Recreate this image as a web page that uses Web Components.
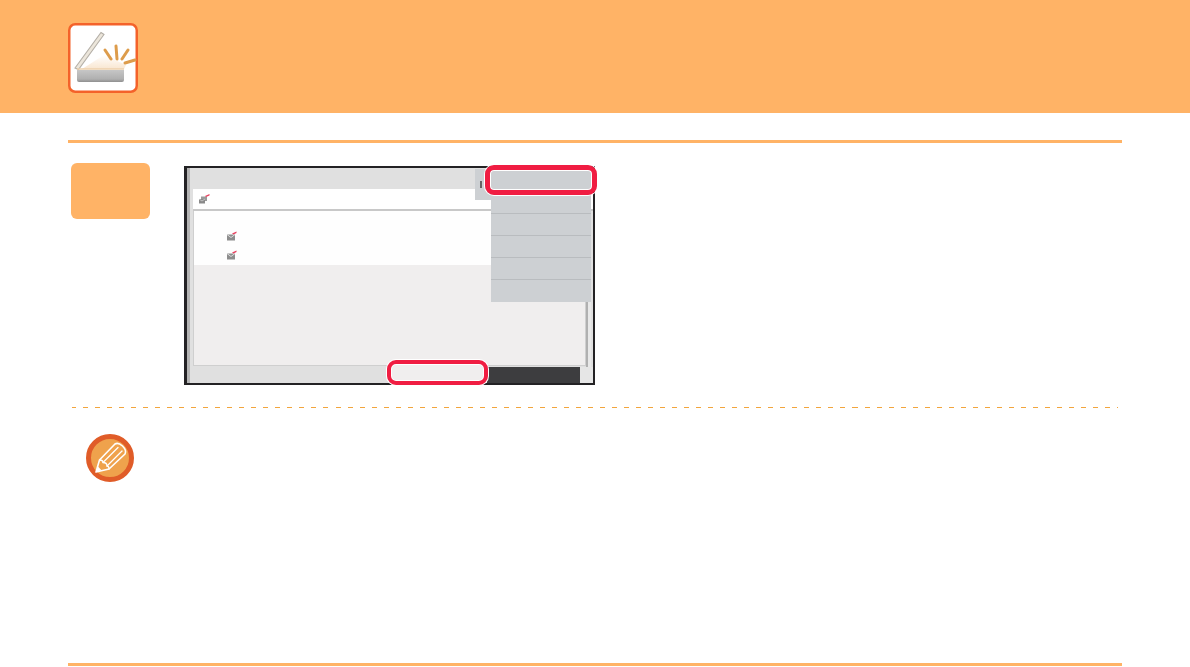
<!DOCTYPE html>
<html lang="en"><head><meta charset="utf-8"><title>Scanner</title>
<style>html,body{margin:0;background:#fff}body{width:1190px;height:667px;overflow:hidden;font-family:"Liberation Sans",sans-serif}</style>
</head><body>
<manual-page>
  <page-header slot="header"></page-header>
  <step-row><device-screen></device-screen></step-row>
  <note-block></note-block>
</manual-page>
<script>
function def(name, html){
  customElements.define(name, class extends HTMLElement{
    constructor(){super();this.attachShadow({mode:'open'}).innerHTML=html;}
  });
}
const env=`<svg width="10" height="10" viewBox="0 0 10 10" style="filter:blur(.25px)"><path d="M0 3.500 H8 V9.500 H0Z" fill="#8d8d8d"/><path d="M0 3.500 L4 6.500 L8 3.500" stroke="#ddd" fill="none"/><path d="M5 2.500 L9.500 .5 V2 L6.500 3.500Z" fill="#e8405f"/></svg>`;
def('manual-page',`<style>
:host{display:flex;flex-direction:column;width:1190px;height:667px}
main{flex:1;display:flex;flex-direction:column;margin:27px 68px 1px;border-top:3px solid #ffb366;border-bottom:3px solid #ffb366;box-sizing:border-box}
</style><slot name="header"></slot><main><slot></slot></main>`);
def('page-header',`<style>
:host{display:flex;align-items:flex-start;height:113px;background:#ffb366;padding:23px 0 0 68px;box-sizing:border-box}
svg{display:block}
</style>
<svg width="70" height="70" viewBox="0 0 70 70">
<defs>
<linearGradient id="b" x1="0" y1="0" x2="0" y2="1"><stop offset="0" stop-color="#c6c6c6"/><stop offset=".75" stop-color="#b0b0b0"/><stop offset="1" stop-color="#8f8f8f"/></linearGradient>
<linearGradient id="g" x1="0" y1="0" x2="0" y2="1"><stop offset="0" stop-color="#fff"/><stop offset="1" stop-color="#f9e6d0"/></linearGradient>
<filter id="s"><feGaussianBlur stdDeviation=".5"/></filter>
</defs>
<rect x="1.250" y="1.250" width="67.500" height="67.500" rx="6" fill="#fff" stroke="#f4622a" stroke-width="2.500"/>
<g filter="url(#s)">
<path d="M14 46 L36 32 L58 42 L56 46Z" fill="url(#g)"/>
<path d="M7 45 L33 9.500 L36 11.500 L10.500 46.500Z" fill="#ece6db" stroke="#b4afa7" stroke-width="1.100"/>
<path d="M9 47 H56 V57 Q56 59 54 59 H11 Q9 59 9 57Z" fill="url(#b)"/>
<path d="M9 46 H56" stroke="#ecd0ad" stroke-width="1.500"/>
<g stroke="#dd9c4c" stroke-width="3" stroke-linecap="round" fill="none">
<path d="M37 27 L43 36"/><path d="M48 23 L49 36"/><path d="M60 27 L54 36"/><path d="M67 37 L57 40"/>
</g></g>
</svg>`);
def('step-row',`<style>
:host{display:flex;height:265px;box-sizing:border-box;border-bottom:1px dashed #f2a53d;margin:0 4px;padding:20px 0 0 0;align-items:flex-start;border-image:repeating-linear-gradient(90deg,#f2a53d 0 5px,transparent 5px 12px) 1}
.n{width:79px;height:56px;background:#ffb366;border-radius:6px;margin:0 34px 0 -1px;flex:none}
</style><div class="n"></div><slot></slot>`);
def('device-screen',`<style>
:host{display:block;position:relative;width:411px;height:219px;margin-top:3px;box-sizing:border-box;border:solid #232224;border-width:2px 2px 2px 3px;background:#e0e0e0}
.wrap{position:absolute;inset:0}
.stripe{position:absolute;left:0;top:0;bottom:0;width:3px;background:#b4b4b4}
.title{position:absolute;left:6px;right:0;top:21px;height:20px;background:#fff;border-bottom:2px solid #c8c8c8}
.panel{position:absolute;left:6px;top:43px;width:393px;height:155px;background:#f0eeee;border:solid #cfcfcf;border-width:0 1px 1px 1px;box-sizing:border-box}
.list{height:54px;background:#fefefe;display:flex;flex-direction:column;padding:20px 0 0 33px;box-sizing:border-box;gap:9px}
.list svg{display:block}
.tab{position:absolute;left:288px;top:1px;width:16px;height:31px;background:#cdd0d3}
.tab::after{content:"";position:absolute;left:5px;top:12px;width:2px;height:7px;background:#666}
.menu{position:absolute;left:304px;top:1px;width:100px;height:133px;background:#cdd0d3;display:flex;flex-direction:column;justify-content:flex-end}
.menu i{display:block;height:22px;border-top:1px solid #b9bcbf;box-sizing:border-box}
.menu i:first-child{height:23px;border-top:0}
.dark{position:absolute;left:300px;top:199px;width:93px;height:16px;background:#3d3d3f}
.edge{position:absolute;left:393px;top:199px;right:0;bottom:0;background:#e6e6e6}
.rs{position:absolute;left:399px;top:134px;width:5px;bottom:0;background:#e8e8e8;border-left:2px solid #b0b0b0;box-sizing:border-box}
.hl{position:absolute;box-sizing:border-box;border:5px solid #f01d42;border-radius:9px;box-shadow:0 0 0 1px #fff,inset 0 0 0 1px #fff}
.h1{left:298px;top:-3px;width:112px;height:30px}
.h2{left:200px;top:192px;width:101px;height:25px;background:#f0eeee;border-width:4px}
.ic{position:absolute;left:12px;top:25px;filter:blur(.3px)}
</style>
<div class="wrap">
<div class="stripe"></div>
<div class="title"></div>
<svg class="ic" width="11" height="11" viewBox="0 0 11 11"><path d="M2 3.500 H8 V8 H2Z" fill="#9a9a9a"/><path d="M0 6 H6 V10.500 H0Z" fill="#8a8a8a"/><path d="M0 6 L3 8 L6 6" stroke="#ddd" stroke-width=".7" fill="none"/><path d="M6 3 L10.500 1 V2.500 L7 4Z" fill="#e8405f"/></svg>
<div class="panel"><div class="list">${env}${env}</div></div>
<div class="tab"></div>
<div class="menu"><i></i><i></i><i></i><i></i><i></i><i style="height:1px;border:0;visibility:hidden"></i></div>
<div class="rs"></div>
<div class="dark"></div><div class="edge"></div>
<div class="hl h1"></div><div class="hl h2"></div>
</div>`);
def('note-block',`<style>
:host{display:block;padding:26px 0 0 18px}
svg{display:block}
</style>
<svg width="48" height="48" viewBox="0 0 48 48">
<circle cx="24" cy="24" r="21.500" fill="#efa24c" stroke="#e05c28" stroke-width="5"/>
<g fill="none" stroke="#fff" stroke-width="1.300" stroke-linejoin="round" stroke-linecap="round">
<path d="M10 38 L13.500 26 L29 10 Q32 8 36.500 12 Q41 16.500 39 20 L23 35Z" stroke-width="1.600"/>
<path d="M17 28.500 L32 13.500"/><path d="M21 32 L36 17"/>
<path d="M13.500 26 Q17 26 17 28.500 Q21 28.500 21 32 Q23 32 23 35"/>
<path d="M10 38 L15.500 36.300 L12 32.500Z" fill="#fff" stroke="none"/>
</g></svg>`);
</script>
</body></html>
